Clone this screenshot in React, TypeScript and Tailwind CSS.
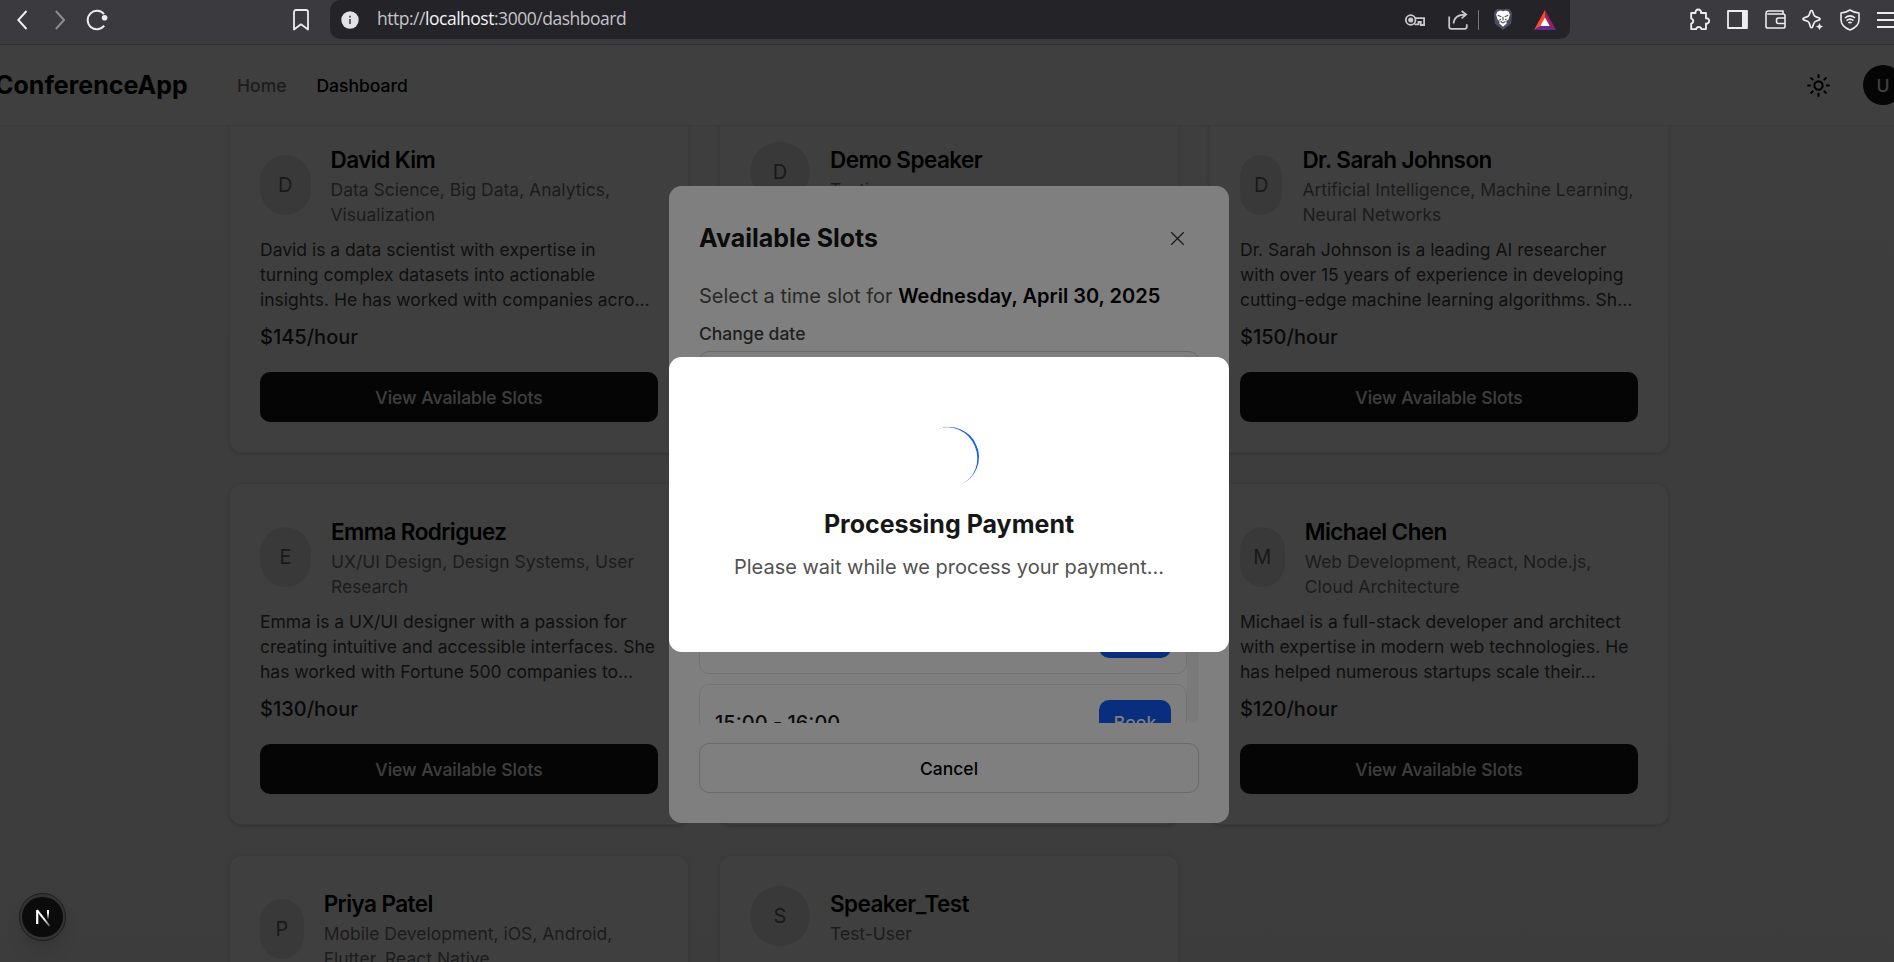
import type { ReactNode } from "react";
import { Sun } from "lucide-react";

type Speaker = {
  name: string;
  topics: string;
  bio: string;
  rate: string;
};

const speakers: (Speaker | null)[] = [
  {
    name: "David Kim",
    topics: "Data Science, Big Data, Analytics, Visualization",
    bio: "David is a data scientist with expertise in turning complex datasets into actionable insights. He has worked with companies acro…",
    rate: "$145/hour",
  },
  { name: "Demo Speaker", topics: "Testing", bio: "", rate: "" },
  {
    name: "Dr. Sarah Johnson",
    topics: "Artificial Intelligence, Machine Learning, Neural Networks",
    bio: "Dr. Sarah Johnson is a leading AI researcher with over 15 years of experience in developing cutting-edge machine learning algorithms. Sh…",
    rate: "$150/hour",
  },
  {
    name: "Emma Rodriguez",
    topics: "UX/UI Design, Design Systems, User Research",
    bio: "Emma is a UX/UI designer with a passion for creating intuitive and accessible interfaces. She has worked with Fortune 500 companies to…",
    rate: "$130/hour",
  },
  null,
  {
    name: "Michael Chen",
    topics: "Web Development, React, Node.js, Cloud Architecture",
    bio: "Michael is a full-stack developer and architect with expertise in modern web technologies. He has helped numerous startups scale their…",
    rate: "$120/hour",
  },
  {
    name: "Priya Patel",
    topics: "Mobile Development, iOS, Android, Flutter, React Native",
    bio: "",
    rate: "",
  },
  { name: "Speaker_Test", topics: "Test-User", bio: "", rate: "" },
];

function SpeakerCard({ speaker }: { speaker: Speaker | null }) {
  return (
    <div className="h-[273.6px] rounded-[10px] border border-[#e8e8e8] bg-white p-6 shadow-sm">
      {speaker && (
        <>
          <div className="flex items-center gap-4">
            <div className="flex h-12 w-12 items-center justify-center rounded-full bg-gray-200 text-base text-[#666]">
              {speaker.name[0]}
            </div>
            <div>
              <h3 className="text-lg font-semibold tracking-tight text-black">{speaker.name}</h3>
              <p className="text-sm text-[#737373]">{speaker.topics}</p>
            </div>
          </div>
          {speaker.bio && (
            <>
              <p className="mt-2 text-sm text-[#404040]">{speaker.bio}</p>
              <p className="mt-2 text-base font-medium text-[#262626]">{speaker.rate}</p>
              <button className="mt-4 flex h-10 w-full items-center justify-center rounded-lg bg-[#141414] text-sm font-medium text-[#fafafa]">
                View Available Slots
              </button>
            </>
          )}
        </>
      )}
    </div>
  );
}

function BrowserBar() {
  return (
    <div className="flex h-[45px] w-full shrink-0 items-start border-b border-[#2f2e33] bg-[#3b3a3f] text-[#ededf0]">
      <div className="flex h-[39px] w-[330px] shrink-0 items-center">
        <svg viewBox="0 0 10 20" fill="none" stroke="currentColor" strokeWidth="2" className="ml-[17px] h-5 w-[10px]">
          <path d="M9.5 1 1.3 10l8.2 9" />
        </svg>
        <svg viewBox="0 0 10 20" fill="none" stroke="#8b8a8f" strokeWidth="2" className="ml-[28px] h-5 w-[10px]">
          <path d="M.8 1 9 10 .8 19" />
        </svg>
        <svg viewBox="0 0 22 22" fill="none" stroke="currentColor" strokeWidth="2" className="ml-[21px] h-[22px] w-[22px]">
          <path d="M18 5.2A9.2 9.2 0 1 0 18.2 16.6" />
          <circle cx="18.6" cy="8.8" r="2.8" fill="currentColor" stroke="none" />
        </svg>
        <svg viewBox="0 0 16 22" fill="none" stroke="currentColor" strokeWidth="1.8" className="ml-[185px] h-[22px] w-4">
          <path d="M1 3a2 2 0 0 1 2-2h10a2 2 0 0 1 2 2v17.5l-7-5.2-7 5.2z" strokeLinejoin="round" />
        </svg>
      </div>
      <div className="flex h-[39px] w-[1240px] shrink-0 items-center rounded-b-[10px] rounded-tl-[10px] bg-[#242328]">
        <svg viewBox="0 0 18 18" className="ml-[11px] h-[18px] w-[18px]">
          <circle cx="9" cy="9" r="8.7" fill="#e3e2e9" />
          <path d="M9 8v5M9 4.8v1.6" stroke="#55545a" strokeWidth="1.8" />
        </svg>
        <div className="mb-[2px] ml-[18px] w-[260px] font-['Open_Sans',sans-serif] text-[17.5px] tracking-[-0.48px] whitespace-nowrap text-[#c4c3ca]">
          http://<span className="text-[#f2f2f5]">localhost</span>:3000/dashboard
        </div>
        <div className="ml-auto flex items-center text-[#c9c8ce]">
          <svg viewBox="0 0 20 12" fill="none" stroke="currentColor" strokeWidth="1.8" className="mr-[23px] h-3 w-5">
            <circle cx="5.7" cy="6" r="4.8" />
            <circle cx="5.7" cy="6" r="1.7" fill="currentColor" />
            <path d="M10 4.1h9.1v6.9h-3.3V8h-2.300v2.400H9.500" />
          </svg>
          <svg viewBox="0 0 20 20" fill="none" stroke="currentColor" strokeWidth="1.7" className="h-5 w-5">
            <path d="M1.2 6.5v10.3a2 2 0 0 0 2 2h13.6a2 2 0 0 0 2-2v-2.6M5.5 13.5c.4-5.2 4-8.900 12-8.900M13.600 1l4.600 3.600-4.600 3.800" />
          </svg>
          <div className="ml-[10px] h-5 w-px bg-[#77767c]" />
          <svg viewBox="0 0 20 24" className="ml-[14px] h-[23px] w-5">
            <path d="M3.500 1h13l3 4-1 11.500L10 23l-8.500-6.500L.5 5z" fill="#4b4c60" />
            <path d="m4 4 3-1.300 3 .6 3-.6L16 4l1.200 3-1.500 5-2.200 2 .3 2.300L10 19.500l-3.800-3.200.3-2.300-2.200-2L2.800 7z" fill="#fff" />
            <path d="m4.500 7.500 3.700 1.600M15.500 7.500l-3.700 1.600M10 9v4m-2.600 1.200L10 15.600l2.600-1.400M7.600 11.300 6.400 13M12.400 11.300l1.200 1.700" stroke="#4b4c60" strokeWidth="1.2" fill="none" />
          </svg>
          <svg viewBox="0 0 22 20" className="mr-[14px] ml-[21px] h-5 w-[22px]">
            <path d="M11 0 0 20l7-4 4-7z" fill="#ff4724" />
            <path d="m11 0 11 20-7-4-4-7z" fill="#9e1f63" />
            <path d="m0 20 7-4.500h8l7 4.500z" fill="#662d91" />
            <path d="m11 7.500 4.700 8.500H6.300z" fill="#fff" />
          </svg>
        </div>
      </div>
      <div className="flex h-[39px] flex-1 items-center overflow-hidden">
        <svg viewBox="0 0 24 24" fill="none" stroke="currentColor" strokeWidth="1.8" strokeLinejoin="round" className="ml-[117px] h-[25px] w-[25px] shrink-0">
          <path d="M4 5.800h4.200a2.700 2.700 0 1 1 5.200 0h4.800v5a2.600 2.600 0 1 1 0 5.100v5.300h-4.400a2.500 2.500 0 0 0-4.900 0H4v-5.200a2.500 2.500 0 0 0 0-4.900z" />
        </svg>
        <svg viewBox="0 0 21 19" className="ml-[15px] h-[19px] w-[21px] shrink-0">
          <path d="M1 1h19v17H1z" fill="none" stroke="#ededf0" strokeWidth="1.800" strokeLinejoin="round" />
          <path d="M15 1h5v17h-5z" fill="#ededf0" />
        </svg>
        <svg viewBox="0 0 21 19" fill="none" stroke="currentColor" strokeWidth="1.600" className="ml-[17px] h-[19px] w-[21px] shrink-0">
          <path d="M1 3.500v12.700A1.800 1.800 0 0 0 2.800 18h15.400a1.800 1.800 0 0 0 1.800-1.800V5.800A1.800 1.800 0 0 0 18.200 4H2.300M1 3.500A2.500 2.500 0 0 1 3 1h15v3M20 8h-6.500a2 2 0 0 0-2 2v1.500a2 2 0 0 0 2 2H20" />
        </svg>
        <svg viewBox="0 0 22 22" fill="none" stroke="currentColor" strokeWidth="1.700" strokeLinejoin="round" className="ml-[16px] h-[22px] w-[22px] shrink-0">
          <path d="M9.500 1.500c.500 0 .800.300 1 .800l1.300 3.500c.300.900.900 1.500 1.800 1.800l3.700 1.400c.900.400.900 1.500 0 1.900l-3.500 1.300c-.900.300-1.500.900-1.800 1.800l-1.500 4c-.400.900-1.600.900-2 0L7.200 14c-.300-.900-.900-1.500-1.800-1.800l-3.700-1.300c-.900-.400-.900-1.500 0-1.900l3.700-1.400C6.300 7.300 6.900 6.700 7.200 5.800l1.300-3.500c.200-.500.500-.800 1-.800z" />
          <path d="m17.500 14 1.100 2.500 2.600 1.100-2.600 1.100-1.100 2.600-1.100-2.600-2.500-1.100 2.500-1.100z" fill="currentColor" stroke="none" />
        </svg>
        <svg viewBox="0 0 20 22" fill="none" stroke="currentColor" strokeWidth="1.600" strokeLinejoin="round" className="ml-[16px] h-[22px] w-5 shrink-0">
          <path d="M10 1c2.600 1.800 5.600 2.800 9 3v6.500c0 4.500-3.500 8.400-9 10.500-5.500-2.100-9-6-9-10.500V4c3.400-.2 6.400-1.200 9-3z" />
          <path d="M5 9c3-2.600 7-2.600 10 0M6.600 11.600c2-1.700 4.800-1.700 6.800 0M8.400 14c1-.8 2.200-.8 3.200 0" />
        </svg>
        <div className="mt-px ml-[17px] flex w-5 shrink-0 flex-col gap-[5px]">
          <div className="h-[2px] w-full bg-[#ededf0]" />
          <div className="h-[2px] w-full bg-[#ededf0]" />
          <div className="h-[2px] w-full bg-[#ededf0]" />
        </div>
      </div>
    </div>
  );
}

function Overlay({ children }: { children: ReactNode }) {
  return (
    <div className="absolute top-0 left-0 flex h-[735.2px] w-[1518.4px] items-center justify-center bg-black/50">
      {children}
    </div>
  );
}

function SlotsDialog() {
  return (
    <div className="flex w-[448px] flex-col rounded-[10px] bg-white p-6">
      <div className="flex items-center justify-between">
        <h2 className="text-xl font-bold text-neutral-900">Available Slots</h2>
        <button className="flex h-9 w-9 items-center justify-center pl-px text-[#333]">
          <svg viewBox="0 0 24 24" fill="none" stroke="currentColor" strokeWidth="1.200" className="h-5 w-5">
            <path d="M6 6l12 12M18 6 6 18" />
          </svg>
        </button>
      </div>
      <p className="mt-4 text-base text-neutral-600">
        Select a time slot for <span className="font-semibold text-black">Wednesday, April 30, 2025</span>
      </p>
      <div className="mt-2 text-sm font-medium text-neutral-700">Change date</div>
      <div className="mt-1 h-[41.6px] w-full rounded-lg border border-neutral-300" />
      <div className="mt-4 flex h-[240px] w-full overflow-hidden">
        <div className="flex flex-1 flex-col gap-2">
          {["", "", "", "15:00 - 16:00"].map((time, i) => (
            <div key={i} className="flex h-[61.6px] shrink-0 items-center justify-between rounded-lg border border-neutral-200 px-3 text-neutral-900">
              <span className="text-base font-medium">{time}</span>
              <button className="flex h-9 w-[57.6px] items-center justify-center rounded-lg bg-blue-600 text-sm font-medium text-white">
                {time && "Book"}
              </button>
            </div>
          ))}
        </div>
        <div className="w-[9.6px] rounded-full bg-neutral-100" />
      </div>
      <button className="mt-4 flex h-10 w-full items-center justify-center rounded-lg border border-neutral-300 text-sm font-medium text-black">
        Cancel
      </button>
    </div>
  );
}

function PaymentDialog() {
  return (
    <div className="w-[448px] rounded-[10px] bg-white p-6">
      <div className="flex flex-col items-center py-8">
        <div className="mb-4 h-12 w-12 rotate-[-113deg] rounded-full border-b-2 border-blue-600" />
        <h2 className="mb-2 text-xl font-bold text-neutral-900">Processing Payment</h2>
        <p className="text-base text-neutral-600">Please wait while we process your payment...</p>
      </div>
    </div>
  );
}

export default function App() {
  return (
    <div className="flex h-[962px] w-[1894px] flex-col overflow-hidden bg-[#3b3a3f]">
      <BrowserBar />
      <div className="relative flex h-[733.6px] w-[1515.2px] flex-col overflow-hidden bg-linear-to-b from-[#f9f9f9] to-[#f3f3f3] font-['Inter',sans-serif] [zoom:1.25]">
        <header className="z-0 flex h-[65px] w-[1518.4px] shrink-0 items-center border-b border-[#e5e5e5] bg-white">
          <div className="-ml-[4px] text-xl font-bold text-black">ConferenceApp</div>
          <nav className="ml-[39.5px] flex gap-6 text-sm font-medium">
            <span className="text-[#737373]">Home</span>
            <span className="text-black">Dashboard</span>
          </nav>
          <Sun className="ml-auto h-5 w-5 text-black" />
          <div className="mr-[-4px] ml-[26px] flex h-8 w-8 items-center justify-center rounded-full bg-[#141414] text-sm font-medium text-white">
            U
          </div>
        </header>
        <main className="flex min-h-0 w-[1518.4px] flex-1 items-start justify-center overflow-hidden">
          <div className="-mt-3 grid w-[1152px] grid-cols-3 gap-6">
            {speakers.map((speaker, i) => (
              <SpeakerCard key={i} speaker={speaker} />
            ))}
          </div>
        </main>
        <Overlay>
          <SlotsDialog />
        </Overlay>
        <Overlay>
          <PaymentDialog />
        </Overlay>
        <div className="absolute bottom-[17px] left-[15px] flex h-[38px] w-[38px] items-center justify-center rounded-full border border-[#1c1c1c] bg-[#333] p-[2px] shadow-lg">
          <div className="flex h-full w-full items-center justify-center rounded-full bg-[#0b0b0b]">
            <svg viewBox="0 0 16 19" fill="none" strokeWidth="2" className="h-[15.2px] w-[12.800px]">
              <defs>
                <linearGradient id="stem" x1="0" y1="0" x2="0" y2="1" gradientUnits="objectBoundingBox">
                  <stop offset="0.3" stopColor="#fff" />
                  <stop offset="1" stopColor="#fff" stopOpacity="0.1" />
                </linearGradient>
                <linearGradient id="slant" x1="9" y1="11" x2="15" y2="18.500" gradientUnits="userSpaceOnUse">
                  <stop stopColor="#fff" />
                  <stop offset="1" stopColor="#fff" stopOpacity="0.25" />
                </linearGradient>
              </defs>
              <path d="M2.200 16V2.200" stroke="#fff" strokeWidth="2.200" />
              <path d="M2 2.200 14.500 18" stroke="url(#slant)" />
              <path d="M12 2h2v9h-2z" fill="url(#stem)" />
            </svg>
          </div>
        </div>
      </div>
    </div>
  );
}
